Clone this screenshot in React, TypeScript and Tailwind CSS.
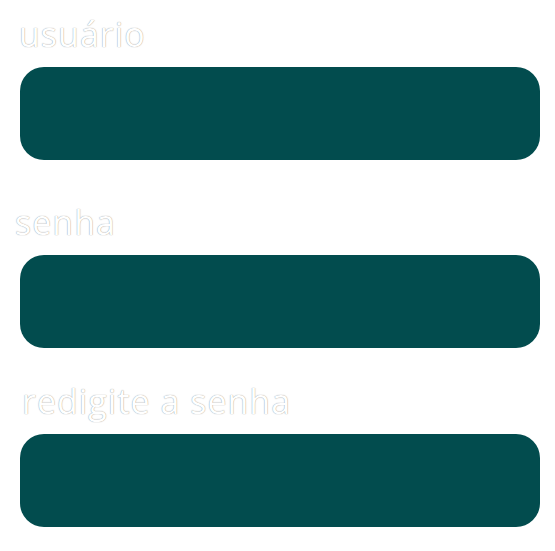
export default function App() {
  const label =
    "text-[34px] leading-[40px] tracking-[1px] text-white [font-family:'Open_Sans',sans-serif] [text-shadow:0_0_1px_#7a7a7a]";
  const box = "h-[93px] w-[520px] rounded-[24px] bg-[#024c4e]";

  return (
    <div className="w-[555px] h-[551px] bg-white pt-[14px]">
      <div className={`${label} ml-[19px]`}>usuário</div>
      <div className={`${box} ml-[20px] mt-[13px]`} />
      <div className={`${label} ml-[15px] mt-[42px]`}>senha</div>
      <div className={`${box} ml-[20px] mt-[13px]`} />
      <div className={`${label} ml-[22px] mt-[33px]`}>redigite a senha</div>
      <div className={`${box} ml-[20px] mt-[13px]`} />
    </div>
  );
}
